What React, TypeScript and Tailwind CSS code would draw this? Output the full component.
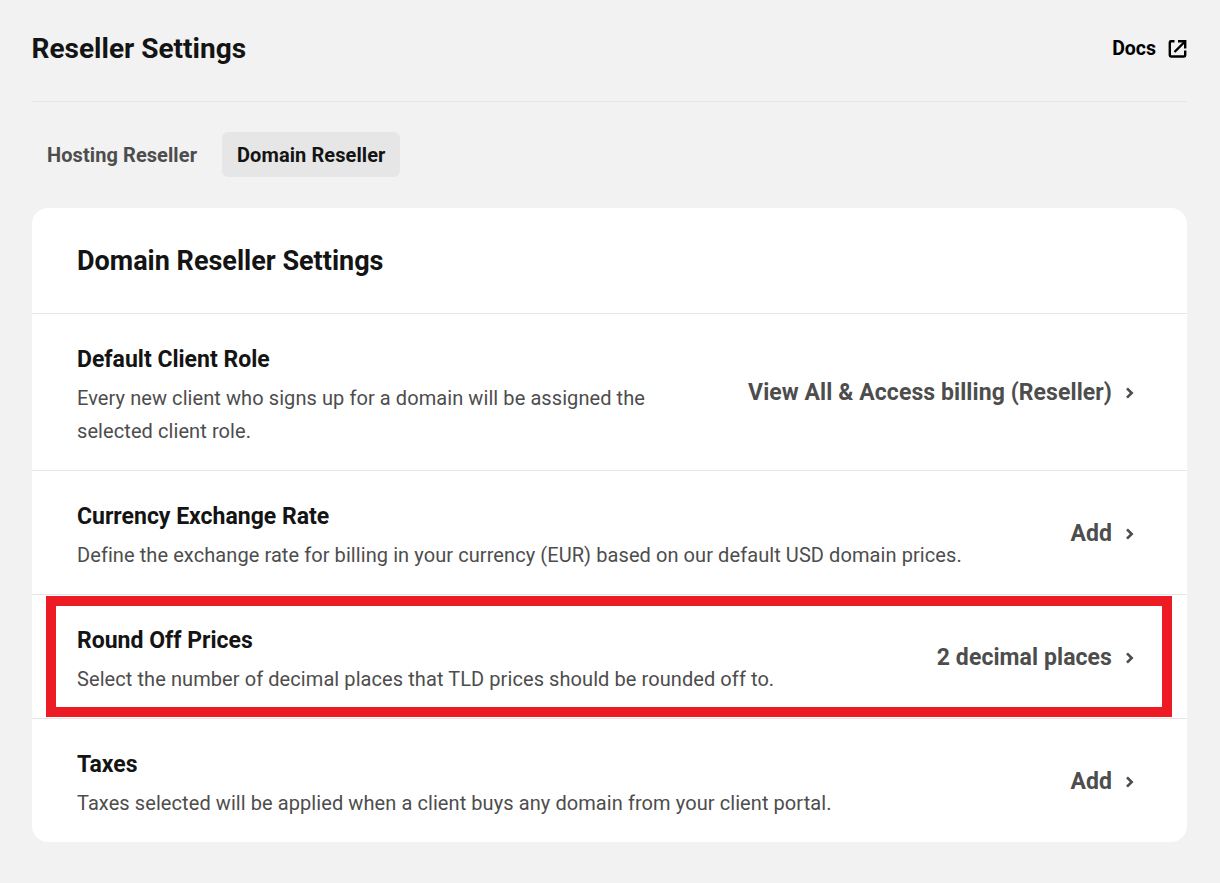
import React from "react";

function Chevron() {
  return (
    <svg width="12" height="14" viewBox="0 0 12 14" fill="none" className="ml-[12px] shrink-0">
      <path d="M3 2.3 L7.7 7 L3 11.7" stroke="#4d4d4d" strokeWidth="2.6" />
    </svg>
  );
}

function Row({ title, desc, value, highlighted, descClass, last, className }: { title: string; desc: string; value: string; highlighted?: boolean; descClass?: string; last?: boolean; className: string }) {
  return (
    <div className={`relative flex items-center justify-between pl-[45px] pr-[51px] ${last ? "" : "border-b border-[#e6e6e6]"} ${className}`}>
      <div className={`pt-[7px] ${descClass ?? ""}`}>
        <div className="text-[23px] leading-[33px] font-bold text-[#141414]">{title}</div>
        <div className="text-[20px] leading-[33px] tracking-[0.08px] text-[#4d4d4d] mt-[6px]">{desc}</div>
      </div>
      <div className="flex items-center text-[23px] leading-[36px] pt-[2px] font-bold tracking-[0.08px] text-[#4d4d4d]">
        <span>{value}</span>
        <Chevron />
      </div>
      {highlighted && <div className="absolute left-[14px] right-[15px] top-[1px] h-[121px] border-[10px] border-[#ed1c24]" />}
    </div>
  );
}

export default function App() {
  return (
    <div className="min-h-[883px] bg-[#f2f2f2] pl-[32px] pr-[33px] pb-[41px] font-['Roboto',sans-serif]">
      <div className="flex items-center justify-between h-[102px] pb-[3px] border-b border-[#e6e6e6]">
        <h1 className="text-[28px] font-bold text-[#141414] -ml-[0.5px]">Reseller Settings</h1>
        <div className="flex items-center gap-[11px] text-[19.5px] font-bold text-black">
          <span>Docs</span>
          <svg width="20" height="20" viewBox="0 0 20 20" fill="none" stroke="#000" strokeWidth="2.4" className="-mt-[1px]">
            <path d="M7.5 2.3 H4 Q2.8 2.3 2.8 3.5 V16.3 Q2.8 17.5 4 17.5 H17 Q18.2 17.5 18.2 16.3 V11.5" />
            <path d="M7.5 13 L17.5 3" />
            <path d="M11 2.3 H18.2 V9.5" />
          </svg>
        </div>
      </div>
      <div className="flex gap-[10px] mt-[30px]">
        <div className="h-[45px] px-[15px] flex items-center text-[20px] font-bold tracking-[0.08px] text-[#4d4d4d]">Hosting Reseller</div>
        <div className="h-[45px] px-[15px] flex items-center text-[20px] font-bold tracking-[0.08px] text-[#141414] bg-[#e6e6e6] rounded-[6px]">Domain Reseller</div>
      </div>
      <div className="mt-[31px] bg-white rounded-[16px]">
        <div className="h-[106px] flex items-center pl-[45px] pt-[2px] border-b border-[#e6e6e6]">
          <h2 className="text-[27px] font-bold text-[#141414]">Domain Reseller Settings</h2>
        </div>
        <Row className="h-[157px]" descClass="w-[620px]" title="Default Client Role" desc="Every new client who signs up for a domain will be assigned the selected client role." value="View All & Access billing (Reseller)" />
        <Row className="h-[124px]" title="Currency Exchange Rate" desc="Define the exchange rate for billing in your currency (EUR) based on our default USD domain prices." value="Add" />
        <Row className="h-[124px]" highlighted title="Round Off Prices" desc="Select the number of decimal places that TLD prices should be rounded off to." value="2 decimal places" />
        <Row className="h-[123px]" last title="Taxes" desc="Taxes selected will be applied when a client buys any domain from your client portal." value="Add" />
      </div>
    </div>
  );
}
